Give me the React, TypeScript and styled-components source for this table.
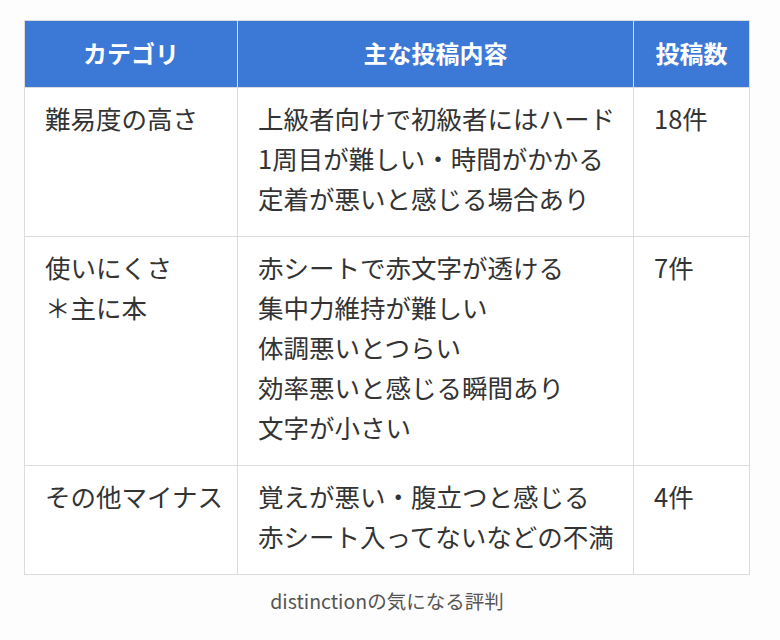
import * as React from 'react';
import styled, {createGlobalStyle} from 'styled-components';

const GlobalStyle = createGlobalStyle`
  body {
    margin: 0;
    background: #fdfdfd;
    font-family: "Noto Sans CJK JP", "Noto Sans", sans-serif;
    color: #333;
  }
`;

const Wrapper = styled.section`
  padding: 20px 24px;
`;

const Table = styled.table`
  width: 725px;
  table-layout: fixed;
  border-collapse: collapse;
  background: #fff;
  font-size: 25.5px;
  line-height: 40px;
`;

const Caption = styled.caption`
  caption-side: bottom;
  padding-top: 12px;
  font-size: 19.5px;
  line-height: 28px;
  color: #555;
`;

const Head = styled.th<{$width: number}>`
  box-sizing: border-box;
  width: ${p => p.$width}px;
  padding: 12px 0 14px;
  background: #3c78d6;
  color: #fff;
  font-size: 24px;
  font-weight: 700;
  text-align: center;
  white-space: nowrap;
  border: 1px solid #dcdcdc;
`;

const Cell = styled.td`
  padding: 10px 20px 18px;
  vertical-align: top;
  text-align: left;
  border: 1px solid #dcdcdc;
`;

const Line = styled.div`
  white-space: nowrap;
`;

type Row = {
  category: string[];
  posts: string[];
  count: string;
};

const rows: Row[] = [
  {
    category: ['難易度の高さ'],
    posts: ['上級者向けで初級者にはハード', '1周目が難しい・時間がかかる', '定着が悪いと感じる場合あり'],
    count: '18件',
  },
  {
    category: ['使いにくさ', '＊主に本'],
    posts: ['赤シートで赤文字が透ける', '集中力維持が難しい', '体調悪いとつらい', '効率悪いと感じる瞬間あり', '文字が小さい'],
    count: '7件',
  },
  {
    category: ['その他マイナス'],
    posts: ['覚えが悪い・腹立つと感じる', '赤シート入ってないなどの不満'],
    count: '4件',
  },
];

export default function App() {
  return (
    <Wrapper>
      <GlobalStyle />
      <Table>
        <Caption>distinctionの気になる評判</Caption>
        <thead>
          <tr>
            <Head $width={213}>カテゴリ</Head>
            <Head $width={396}>主な投稿内容</Head>
            <Head $width={116}>投稿数</Head>
          </tr>
        </thead>
        <tbody>
          {rows.map(row => (
            <tr key={row.count}>
              <Cell>
                {row.category.map(c => <Line key={c}>{c}</Line>)}
              </Cell>
              <Cell>
                {row.posts.map(p => <Line key={p}>{p}</Line>)}
              </Cell>
              <Cell>{row.count}</Cell>
            </tr>
          ))}
        </tbody>
      </Table>
    </Wrapper>
  );
}
